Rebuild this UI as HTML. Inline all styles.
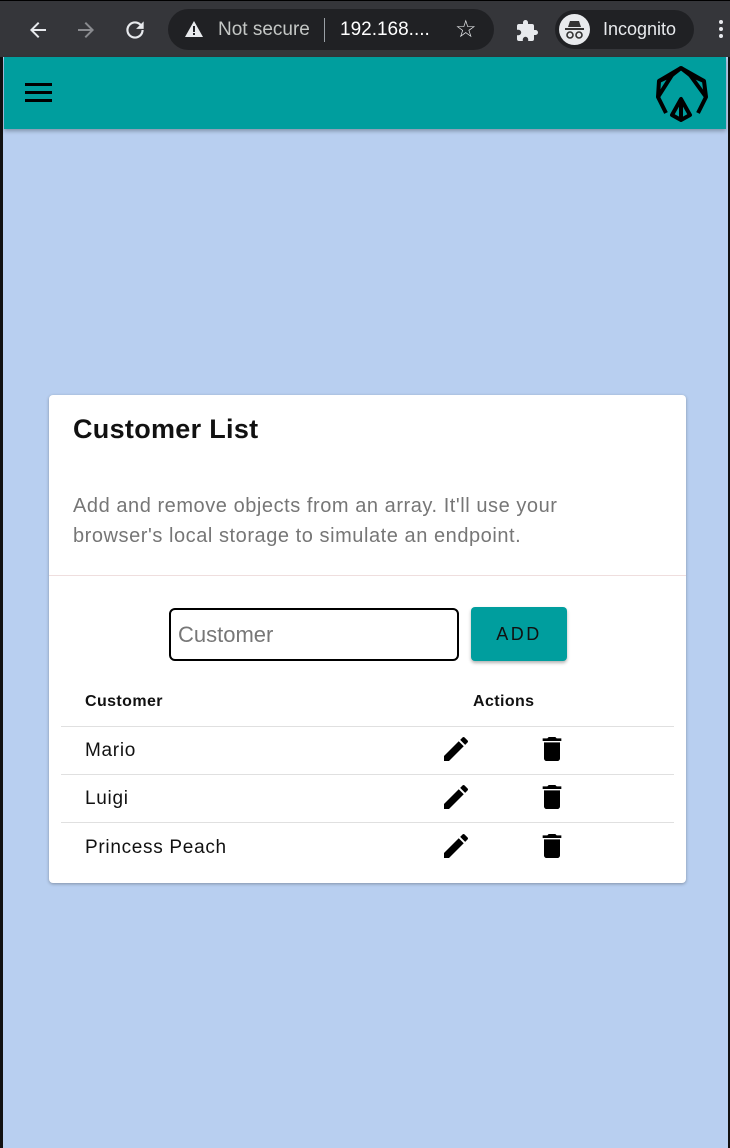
<!DOCTYPE html>
<html><head><meta charset="utf-8"><style>
*{box-sizing:border-box;margin:0;padding:0}
body{width:730px;height:1148px;overflow:hidden;background:#b8cff0;font-family:"Liberation Sans",sans-serif;position:relative}
.chrome{position:absolute;left:0;top:0;width:730px;height:57px;background:#35363a;border-top:1px solid #000}
.omni{position:absolute;left:168px;top:8px;width:326px;height:41px;border-radius:21px;background:#202124}
.t{position:absolute;color:#e8eaed;font-size:19px}
.hdr{position:absolute;left:4px;top:57px;width:722px;height:72px;background:#009e9e;box-shadow:0 2px 4px rgba(0,0,0,.3)}
.card{position:absolute;left:49px;top:395px;width:637px;height:488px;background:#fff;border-radius:4px;box-shadow:0 1px 3px rgba(0,0,0,.3)}
.row{position:absolute;left:12px;width:613px;border-top:1px solid #e0e0e0}
.name{position:absolute;left:36px;font-size:19px;color:#111;letter-spacing:.7px}
</style></head><body>
<div class="chrome">
<svg style="position:absolute;left:26px;top:17px" width="24" height="24" viewBox="0 0 24 24"><path d="M20 11H7.8l5.6-5.6L12 4l-8 8 8 8 1.4-1.4L7.8 13H20z" fill="#e8eaed"/></svg>
<svg style="position:absolute;left:74px;top:17px" width="24" height="24" viewBox="0 0 24 24"><path d="M4 11h12.2l-5.6-5.6L12 4l8 8-8 8-1.4-1.4 5.6-5.6H4z" fill="#8a8b8f"/></svg>
<svg style="position:absolute;left:122px;top:16px" width="26" height="26" viewBox="0 0 24 24"><path d="M17.65 6.35A7.96 7.96 0 0012 4a8 8 0 108 8h-2a6 6 0 11-1.76-4.24L13 11h7V4l-2.35 2.35z" fill="#e8eaed"/></svg>
<div class="omni"></div>
<svg style="position:absolute;left:184px;top:19px" width="20" height="18" viewBox="0 0 20 18"><path d="M10 1L19 17H1z" fill="#e8eaed"/><rect x="9" y="6" width="2" height="6" fill="#202124"/><rect x="9" y="13" width="2" height="2" fill="#202124"/></svg>
<div class="t" style="left:218px;top:18px;color:#c4c7c5;width:96px;overflow:hidden;white-space:nowrap">Not secure</div>
<div style="position:absolute;left:324px;top:17px;width:1px;height:24px;background:#9aa0a6"></div>
<div class="t" style="left:340px;top:18px;color:#fff">192.168....</div>
<div class="t" style="left:455px;top:14px;font-size:24px">☆</div>
<svg style="position:absolute;left:515px;top:18px" width="24" height="24" viewBox="0 0 24 24"><path d="M20.5 11H19V7a2 2 0 00-2-2h-4V3.5a2.5 2.5 0 00-5 0V5H4a2 2 0 00-2 2v3.8h1.5a2.7 2.7 0 010 5.4H2V20a2 2 0 002 2h3.8v-1.5a2.7 2.7 0 015.4 0V22H17a2 2 0 002-2v-4h1.5a2.5 2.5 0 000-5z" fill="#e8eaed"/></svg>
<div style="position:absolute;left:555px;top:9px;width:139px;height:39px;border-radius:20px;background:#202124"></div>
<div style="position:absolute;left:559px;top:13px;width:31px;height:31px;border-radius:50%;background:#e8eaed"></div>
<svg style="position:absolute;left:562px;top:17px" width="25" height="24" viewBox="0 0 25 24"><path d="M6 9l2-6h9l2 6z M3 10h19v2H3z" fill="#333"/><circle cx="8" cy="17" r="3" fill="none" stroke="#333" stroke-width="1.6"/><circle cx="17" cy="17" r="3" fill="none" stroke="#333" stroke-width="1.6"/></svg>
<div class="t" style="left:603px;top:18px;font-size:18px">Incognito</div>
<div style="position:absolute;left:719px;top:19px;width:4px;height:4px;border-radius:50%;background:#e8eaed;box-shadow:0 7px 0 #e8eaed,0 14px 0 #e8eaed"></div>
</div>
<div style="position:absolute;left:0;top:57px;width:3px;height:1091px;background:#111"></div>
<div style="position:absolute;right:0;top:57px;width:2px;height:1091px;background:#111"></div>
<div class="hdr">
<div style="position:absolute;left:21px;top:26px;width:27px;height:3px;background:#000;box-shadow:0 8px 0 #000,0 16px 0 #000"></div>
<svg style="position:absolute;left:650px;top:8px" width="58" height="58" viewBox="0 0 58 58" fill="none" stroke="#000" stroke-width="4" stroke-linejoin="round"><path d="M27 3L5 16 4 32 12 48"/><path d="M27 3L50 16 52 32 44 48"/><path d="M5 16L18 10 27 3 36 10 50 16"/><path d="M4 32L18 10M52 32L36 10"/><path d="M27 34L18 50 27 55 36 50Z"/><path d="M27 37V54"/></svg>
</div>
<div class="card">
<div style="position:absolute;left:24px;top:19px;font-size:27px;font-weight:bold;color:#111;letter-spacing:.3px">Customer List</div>
<div style="position:absolute;left:24px;top:96px;font-size:20px;line-height:30px;color:#767676;letter-spacing:.55px;white-space:nowrap">Add and remove objects from an array. It'll use your<br>browser's local storage to simulate an endpoint.</div>
<div style="position:absolute;left:0;top:180px;width:637px;border-top:1px solid #efdede"></div>
<div style="position:absolute;left:120px;top:213px;width:290px;height:53px;border:2px solid #000;border-radius:6px;font-size:22px;color:#777;padding:12px 0 0 7px">Customer</div>
<div style="position:absolute;left:422px;top:212px;width:96px;height:54px;background:#009e9e;border-radius:4px;box-shadow:0 2px 3px rgba(0,0,0,.3);text-align:center;line-height:54px;font-size:18px;letter-spacing:2.5px;color:#111">ADD</div>
<div style="position:absolute;left:36px;top:298px;font-size:16px;font-weight:bold;color:#111;letter-spacing:.4px">Customer</div>
<div style="position:absolute;left:424px;top:298px;font-size:16px;font-weight:bold;color:#111;letter-spacing:.4px">Actions</div>
<div class="row" style="top:331px"></div>
<div class="row" style="top:379px"></div>
<div class="row" style="top:427px"></div>
<div class="name" style="top:345px">Mario</div>
<div class="name" style="top:393px">Luigi</div>
<div class="name" style="top:442px">Princess Peach</div>
<svg style="position:absolute;left:391px;top:338px" width="32" height="32" viewBox="0 0 24 24"><path d="M3 17.25V21h3.75L17.81 9.94l-3.75-3.75L3 17.25zM20.71 7.04c.39-.39.39-1.02 0-1.41l-2.34-2.34c-.39-.39-1.02-.39-1.41 0l-1.83 1.83 3.75 3.75 1.83-1.83z"/></svg>
<svg style="position:absolute;left:391px;top:386px" width="32" height="32" viewBox="0 0 24 24"><path d="M3 17.25V21h3.75L17.81 9.94l-3.75-3.75L3 17.25zM20.71 7.04c.39-.39.39-1.02 0-1.41l-2.34-2.34c-.39-.39-1.02-.39-1.41 0l-1.83 1.83 3.75 3.75 1.83-1.83z"/></svg>
<svg style="position:absolute;left:391px;top:435px" width="32" height="32" viewBox="0 0 24 24"><path d="M3 17.25V21h3.75L17.81 9.94l-3.75-3.75L3 17.25zM20.71 7.04c.39-.39.39-1.02 0-1.41l-2.34-2.34c-.39-.39-1.02-.39-1.41 0l-1.83 1.83 3.75 3.75 1.83-1.83z"/></svg>
<svg style="position:absolute;left:487px;top:338px" width="32" height="32" viewBox="0 0 24 24"><path d="M6 19c0 1.1.9 2 2 2h8c1.1 0 2-.9 2-2V7H6v12zM19 4h-3.5l-1-1h-5l-1 1H5v2h14V4z"/></svg>
<svg style="position:absolute;left:487px;top:386px" width="32" height="32" viewBox="0 0 24 24"><path d="M6 19c0 1.1.9 2 2 2h8c1.1 0 2-.9 2-2V7H6v12zM19 4h-3.5l-1-1h-5l-1 1H5v2h14V4z"/></svg>
<svg style="position:absolute;left:487px;top:435px" width="32" height="32" viewBox="0 0 24 24"><path d="M6 19c0 1.1.9 2 2 2h8c1.1 0 2-.9 2-2V7H6v12zM19 4h-3.5l-1-1h-5l-1 1H5v2h14V4z"/></svg>
</div>
</body></html>
